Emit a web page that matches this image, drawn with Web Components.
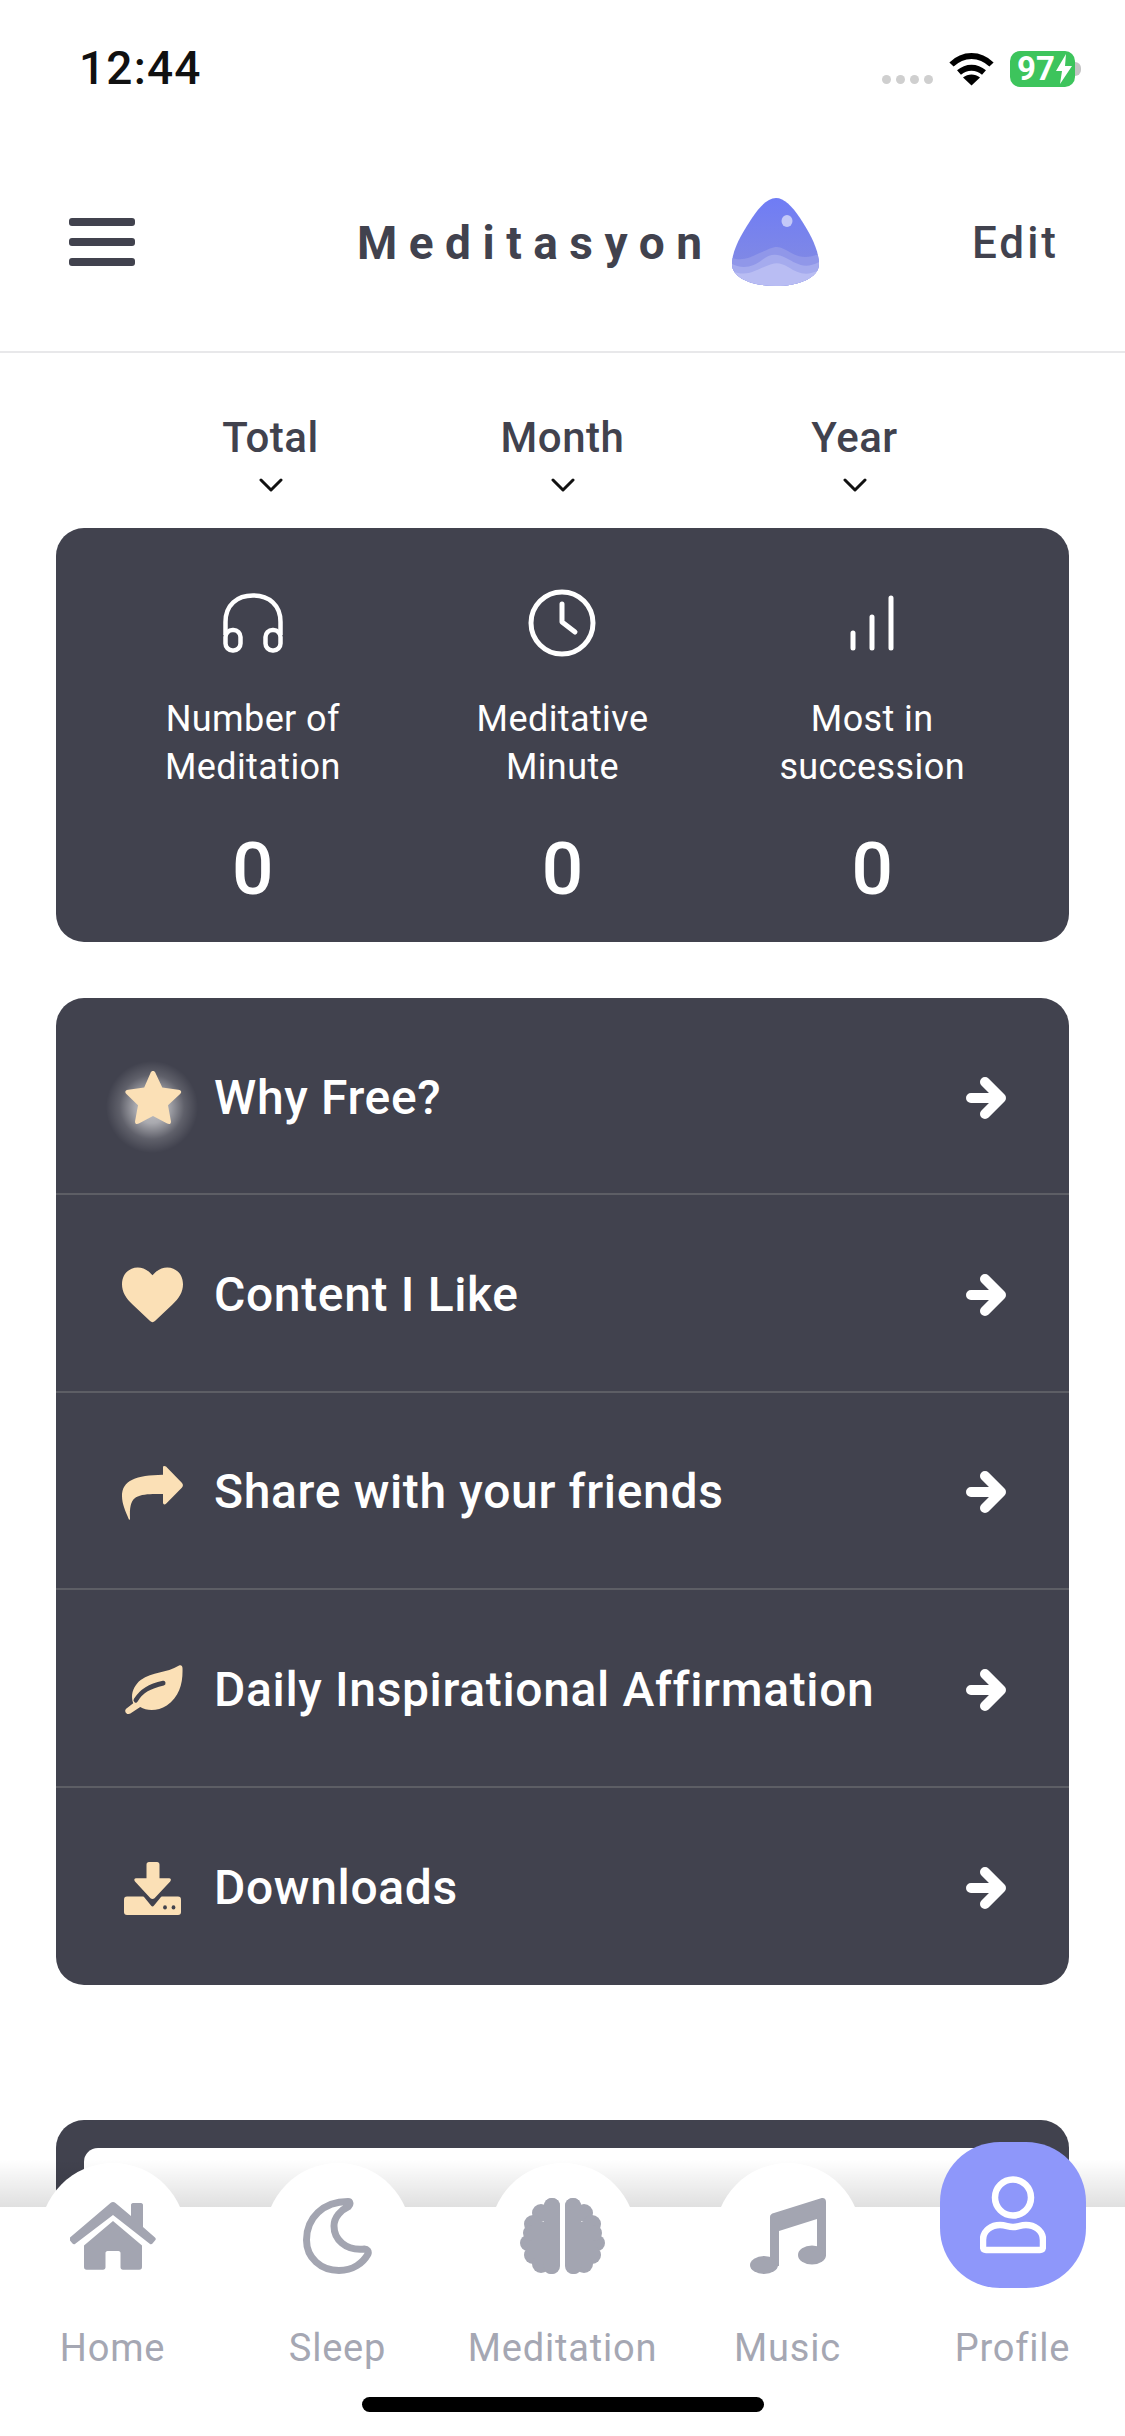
<!DOCTYPE html>
<html lang="en">
<head>
<meta charset="utf-8">
<title>Meditasyon</title>
<style>
  html, body { margin: 0; padding: 0; background: #fff; }
  body { font-family: Roboto, "Noto Sans", sans-serif; width: 1125px; height: 2436px; overflow: hidden; }
  .cream { fill: #fbe0b6; }
</style>
</head>
<body>
<app-screen>
  <status-bar></status-bar>
  <app-header></app-header>
  <period-tabs></period-tabs>

  <stat-card>
    <stat-item><svg slot="icon" width="62" height="60" viewBox="0 0 62 60" fill="none" stroke="#fff" stroke-width="4.500"><path d="M3.500 42V29C3.500 12 15 2.500 31 2.500S58.500 12 58.500 29v13"/><rect x="3.500" y="37" width="15" height="20.500" rx="7"/><rect x="43.500" y="37" width="15" height="20.500" rx="7"/></svg>Number of<br>Meditation<span slot="value">0</span></stat-item>
    <stat-item><svg slot="icon" width="68" height="68" viewBox="0 0 68 68" fill="none" stroke="#fff" stroke-width="5" stroke-linecap="round" stroke-linejoin="round"><circle cx="34" cy="34" r="31"/><path d="M34 15v18l13 10"/></svg>Meditative<br>Minute<span slot="value">0</span></stat-item>
    <stat-item><svg slot="icon" width="44" height="56" viewBox="0 0 44 56" fill="none" stroke="#fff" stroke-width="5" stroke-linecap="round"><path d="M3 53V38M22 53V22M41 53V3"/></svg>Most in<br>succession<span slot="value">0</span></stat-item>
  </stat-card>

  <menu-list>
    <menu-row glow>
      <svg slot="icon" width="58" height="55" viewBox="0 0 58 55"><path class="cream" d="M29 1c1 0 2 .6 2.500 2l6.800 14.500 16 2.200c3 .4 3.800 2.500 1.800 4.300L44 35.200l2.900 15.700c.4 2.700-1.300 3.800-3.700 2.600L29 46l-14.200 7.500c-2.400 1.200-4.100.1-3.700-2.600L14 35.200 2.400 24c-2-1.800-1.200-3.900 1.800-4.300l16-2.200L26.500 3c.5-1.400 1.500-2 2.500-2z"/></svg>
      Why Free?
    </menu-row>
    <menu-row>
      <svg slot="icon" width="62" height="56" viewBox="0 0 62 56"><path class="cream" d="M31 8C36 2 41 0 46 0c9 0 16 7 16 17 0 8-4 14-11 21L33.500 54.500c-1.500 1.500-3.500 1.500-5 0L11 38C4 31 0 25 0 17 0 7 7 0 16 0c5 0 10 2 15 8z"/></svg>
      Content I Like
    </menu-row>
    <menu-row>
      <svg slot="icon" width="61" height="55" viewBox="0 0 61 51" preserveAspectRatio="none"><path class="cream" d="M41 1.500c.8-1 2-.8 3 0l15.800 15c1.500 1.400 1.500 3.200 0 4.600L44 36c-1.200 1-3 .8-3-1.200V27c-9-.3-21-.5-27 3-5 3-6.500 9-6 19.500.1 1.500-.8 1.800-1.300.5C3.500 43 0 36 0 29 0 14 14 9.500 41 9V3z"/></svg>
      Share with your friends
    </menu-row>
    <menu-row>
      <svg slot="icon" width="62" height="49" viewBox="0 0 62 46" preserveAspectRatio="none"><path class="cream" d="M58 .5c2-.8 3.500.3 3.500 2.500 .5 14-3 27-16 35-9 5.500-20 5.500-27 1.500l-10 6c-2 1-3.800.5-4.800-1-.9-1.500-.4-3 1.200-4l6.500-4.500C8 28 12 19 19 14 31 6 45 8 58 .5z"/><path d="M14 33c6-9 14-13 28-16" fill="none" stroke="#41424e" stroke-width="4.500" stroke-linecap="round"/></svg>
      Daily Inspirational Affirmation
    </menu-row>
    <menu-row>
      <svg slot="icon" width="58" height="53" viewBox="0 0 58 49" preserveAspectRatio="none"><rect class="cream" y="32" width="57" height="17" rx="3"/><path d="M9 17h13V3h13v14h13L28.500 39z" fill="#41424e" stroke="#41424e" stroke-width="4" stroke-linejoin="round"/><path class="cream" d="M25 0h8c1.500 0 2.500 1 2.500 2.500V15H45c2 0 2.500 1.500 1.200 3L30.500 33.500c-1.200 1-2.800 1-4 0L11 18c-1.300-1.500-.8-3 1.200-3h10.300V2.500C22.500 1 23.500 0 25 0z"/><circle cx="41" cy="42" r="1.900" fill="#41424e"/><circle cx="49.500" cy="42" r="1.900" fill="#41424e"/></svg>
      Downloads
    </menu-row>
  </menu-list>

  <promo-card></promo-card>

  <tab-bar>
    <tab-item label="Home"><svg width="86" height="68" viewBox="0 0 86 68" fill="#a3a5b1"><path d="M40.500 1c1.500-1.300 3.500-1.300 5 0L61 14V3c0-1 .7-2 2-2h8c1.200 0 2 1 2 2v22l12 10.500c1 .9 1 1.800.2 2.700l-2.700 3.300c-.9 1-1.800 1-2.800.2L43 13 5.300 41.700c-1 .8-1.900.8-2.800-.2L-.2 38.200c-.8-.9-.8-1.800.2-2.700z"/><path d="M43 19l29 24.500V65c0 1.700-1 2.800-2.700 2.800H53c-1.500 0-2.500-1-2.500-2.500V51c0-1-.8-2-2-2h-11c-1.200 0-2 1-2 2v14.300c0 1.500-1 2.500-2.500 2.500H16.700c-1.700 0-2.700-1.100-2.700-2.800V43.500z"/></svg></tab-item>
    <tab-item label="Sleep"><svg width="69" height="76" viewBox="0 0 69 76" fill="none" stroke="#a3a5b1" stroke-width="7" stroke-linejoin="round"><path d="M45 3.500C20 3.500 3.500 20 3.500 42c0 18 14.500 30.500 32.500 30.500 14 0 24-7.500 29-16.500 1-3-1-5-3.500-5C42 53 31 41 31 28c0-9 7-16 14.500-19.500C48 6 47 3.500 45 3.500z"/></svg></tab-item>
    <tab-item label="Meditation"><svg width="85" height="76" viewBox="0 0 85 76" fill="#a3a5b1"><g><circle cx="32" cy="8" r="8"/><circle cx="21" cy="15" r="9"/><circle cx="13" cy="26" r="9"/><circle cx="8" cy="45" r="8"/><circle cx="11" cy="35" r="8"/><circle cx="13" cy="57" r="9"/><circle cx="21" cy="66" r="9"/><circle cx="31" cy="68" r="8"/><path d="M12 24h20v36H12z"/><rect x="24" y="0" width="16" height="76" rx="8"/></g><g transform="matrix(-1 0 0 1 85 0)"><circle cx="32" cy="8" r="8"/><circle cx="21" cy="15" r="9"/><circle cx="13" cy="26" r="9"/><circle cx="8" cy="45" r="8"/><circle cx="11" cy="35" r="8"/><circle cx="13" cy="57" r="9"/><circle cx="21" cy="66" r="9"/><circle cx="31" cy="68" r="8"/><path d="M12 24h20v36H12z"/><rect x="24" y="0" width="16" height="76" rx="8"/></g></svg></tab-item>
    <tab-item label="Music"><svg width="76" height="76" viewBox="0 0 76 76" fill="#a3a5b1"><path d="M24 15L71 .3C74 -.6 76 1 76 4v54h-9V21l-38 12v35h-9V19c0-2 1.500-3.400 4-4z"/><ellipse cx="14" cy="67" rx="14" ry="9"/><ellipse cx="62" cy="57" rx="14" ry="9.500"/></svg></tab-item>
    <tab-item label="Profile" active><svg width="66" height="78" viewBox="0 0 66 78" fill="none" stroke="#fff" stroke-width="6.500" stroke-linejoin="round"><circle cx="33" cy="21.500" r="18"/><path d="M6 74h54c2 0 3-1.500 3-4v-6c0-10-9-15-17-15-6 0-8 2-13 2s-7-2-13-2C12 49 3 54 3 64v6c0 2.500 1 4 3 4z"/></svg></tab-item>
  </tab-bar>
</app-screen>

<script>
// small helper, every element just stamps its own shadow root
const shadow = (el, html) => {
  el.attachShadow({ mode: 'open' }).innerHTML = html;
};

class AppScreen extends HTMLElement {
  constructor() {
    super();
    shadow(this, `
      <style>
        :host { display: block; position: relative; width: 1125px; height: 2436px; overflow: hidden; background: #fff; color: #41424e; }
      </style>
      <slot></slot>`);
  }
}

class StatusBar extends HTMLElement {
  constructor() {
    super();
    shadow(this, `
      <style>
        :host { display: flex; height: 120px; padding: 40px 44px 0 79px; box-sizing: border-box; align-items: flex-start; justify-content: space-between; color: #000; }
        .time { font: 500 46px/56px Roboto, sans-serif; letter-spacing: 1.200px; color: #111; }
        .right { display: flex; align-items: flex-start; margin-top: 11px; }
        .dots { display: flex; gap: 5px; margin: 24px 16px 0 0; }
        .dots i { width: 9px; height: 9px; border-radius: 50%; background: #cfcfcf; }
        .wifi { margin: 1px 16px 0 0; }
        .batt { position: relative; width: 65px; height: 36px; border-radius: 10px; background: #3dc45c; color: #fff; display: flex; align-items: center; padding-left: 7px; box-sizing: border-box; font: 700 33px/36px Roboto, sans-serif; }
        .batt svg { margin-left: 1px; }
        .nub { width: 6px; height: 14px; margin-top: 11px; border-radius: 0 7px 7px 0; background: #c4c4c4; }
      </style>
      <span class="time">12:44</span>
      <div class="right">
        <div class="dots"><i></i><i></i><i></i><i></i></div>
        <svg class="wifi" width="45" height="34" viewBox="0 0 45 34" fill="none" stroke="#000" stroke-width="6"><path d="M2.500 12.500C14 1 31 1 42.500 12.500M10 20.500c7.500-6.500 17.500-6.500 25 0"/><path d="M22.500 33.500l-8.500-8c5-4 12-4 17 0z" fill="#000" stroke="none"/></svg>
        <div class="batt">97<svg width="16" height="30" viewBox="0 0 16 30" fill="#fff"><path d="M10 0L0 17h6l-2 13 12-18H9z"/></svg></div>
        <div class="nub"></div>
      </div>`);
  }
}

class AppHeader extends HTMLElement {
  constructor() {
    super();
    shadow(this, `
      <style>
        :host { display: flex; align-items: center; height: 233px; padding: 12px 66px 0 69px; box-sizing: border-box; border-bottom: 2px solid #e8e8ea; }
        .burger { display: flex; flex-direction: column; gap: 12px; width: 66px; }
        .burger i { height: 8px; border-radius: 3px; background: #41424e; }
        .brand { display: flex; align-items: center; margin-left: 222px; }
        h1 { margin: 3px 0 0; font: 700 46px/54px Roboto, sans-serif; letter-spacing: 11.500px; color: #41424e; }
        svg { margin-left: 18px; }
        .edit { margin-left: auto; margin-top: 3px; font: 500 44px/54px Roboto, sans-serif; letter-spacing: 3px; color: #41424e; }
      </style>
      <div class="burger"><i></i><i></i><i></i></div>
      <div class="brand">
        <h1>Meditasyon</h1>
        <svg width="87" height="88" viewBox="0 0 87 88">
          <defs>
            <clipPath id="drop"><path d="M44 0C52 0 60 8 68 20 78 35 87 52 87 66 87 80 66 88 44 88 20 88 0 80 0 66 0 52 10 35 20 20 28 8 36 0 44 0z"/></clipPath>
            <linearGradient id="body" x1="0" y1="0" x2="0" y2="1"><stop offset="0" stop-color="#6f7cf5"/><stop offset=".7" stop-color="#7f88e6"/></linearGradient>
          </defs>
          <g clip-path="url(#drop)">
            <rect width="87" height="88" fill="url(#body)"/>
            <path d="M0 60C12 64 20 58 30 54S44 46 54 52 72 62 87 56V88H0z" fill="#9097e9"/>
            <path d="M0 66C12 72 22 68 30 62S44 55 54 60 72 72 87 64V88H0z" fill="#a5abee"/>
            <path d="M0 73C14 79 22 73 32 69S46 63 56 69 74 79 87 72V88H0z" fill="#b9bdf3"/>
            <ellipse cx="55" cy="23" rx="5.500" ry="6" fill="#c3c8f8"/>
          </g>
        </svg>
      </div>
      <span class="edit">Edit</span>`);
  }
}

class PeriodTabs extends HTMLElement {
  constructor() {
    super();
    const names = ['Total', 'Month', 'Year'];
    shadow(this, `
      <style>
        :host { display: grid; grid-template-columns: repeat(3, 292px); justify-content: center; height: 175px; padding-top: 60px; box-sizing: border-box; }
        div { display: flex; flex-direction: column; align-items: center; gap: 15px; font: 500 42px/50px Roboto, sans-serif; letter-spacing: .5px; color: #41424e; }
      </style>
      ${names.map(n => `<div>${n}<svg width="24" height="14" viewBox="0 0 24 14" fill="none" stroke="#111" stroke-width="3" stroke-linecap="round" stroke-linejoin="round"><path d="M2 2l10 10L22 2"/></svg></div>`).join('')}`);
  }
}

class StatCard extends HTMLElement {
  constructor() {
    super();
    shadow(this, `
      <style>
        :host { display: grid; grid-template-columns: repeat(3, 1fr); margin: 0 56px; padding: 60px 42px 33px; height: 414px; box-sizing: border-box; background: #41424e; border-radius: 28px; color: #fff; }
      </style>
      <slot></slot>`);
  }
}

class StatItem extends HTMLElement {
  constructor() {
    super();
    shadow(this, `
      <style>
        :host { display: flex; flex-direction: column; align-items: center; text-align: center; }
        .icon { display: flex; align-items: center; justify-content: center; height: 70px; }
        .label { margin-top: 37px; font: 400 36px/48px Roboto, sans-serif; letter-spacing: .4px; color: #fff; }
        .value { margin-top: 38px; font: 500 73px/80px Roboto, sans-serif; color: #fff; }
      </style>
      <div class="icon"><slot name="icon"></slot></div>
      <div class="label"><slot></slot></div>
      <div class="value"><slot name="value"></slot></div>`);
  }
}

class MenuList extends HTMLElement {
  constructor() {
    super();
    shadow(this, `
      <style>
        :host { display: grid; grid-auto-rows: 1fr; margin: 56px 56px 0; height: 987px; background: #41424e; border-radius: 28px; overflow: hidden; }
        ::slotted(menu-row:not(:last-child)) { border-bottom: 2px solid #5d5e65; }
      </style>
      <slot></slot>`);
  }
}

class MenuRow extends HTMLElement {
  constructor() {
    super();
    shadow(this, `
      <style>
        :host { display: flex; align-items: center; padding: 4px 63px 0 66px; box-sizing: border-box; color: #fff; font: 500 48px/60px Roboto, sans-serif; letter-spacing: .65px; }
        .icon { position: relative; display: flex; align-items: center; justify-content: center; width: 61px; height: 60px; margin-right: 31px; }
        :host([glow]) .icon::before { content: ""; position: absolute; left: -16px; top: -7px; width: 92px; height: 92px; border-radius: 50%; background: radial-gradient(circle closest-side, rgba(255,255,255,.68) 0, rgba(255,255,255,.55) 35%, rgba(255,255,255,.16) 70%, rgba(255,255,255,0) 100%); }
        ::slotted(svg) { position: relative; }
        .text { flex: 1; }
      </style>
      <div class="icon"><slot name="icon"></slot></div>
      <div class="text"><slot></slot></div>
      <svg width="40" height="42" viewBox="0 0 40 42" fill="none" stroke="#fff" stroke-width="10" stroke-linecap="round" stroke-linejoin="round"><path d="M5 21h29M19 5l16 16-16 16"/></svg>`);
  }
}

class PromoCard extends HTMLElement {
  constructor() {
    super();
    shadow(this, `
      <style>
        :host { display: block; margin: 135px 56px 0; height: 400px; padding: 28px 28px 0; box-sizing: border-box; background: #41424e; border-radius: 28px 28px 0 0; }
        div { height: 100%; background: #fff; border-radius: 14px 14px 0 0; }
      </style>
      <div></div>`);
  }
}

class TabBar extends HTMLElement {
  constructor() {
    super();
    shadow(this, `
      <style>
        :host { position: absolute; left: 0; right: 0; bottom: 0; height: 229px; display: grid; grid-template-columns: repeat(5, 225px); background: #fff; }
        :host::before { content: ""; position: absolute; left: 0; right: 0; top: -48px; height: 48px; background: linear-gradient(rgba(0,0,0,0), rgba(0,0,0,.12)); }
        .home { position: absolute; left: 50%; bottom: 24px; width: 402px; height: 15px; margin-left: -201px; border-radius: 8px; background: #000; }
      </style>
      <slot></slot>
      <div class="home"></div>`);
  }
}

class TabItem extends HTMLElement {
  constructor() {
    super();
    shadow(this, `
      <style>
        :host { position: relative; display: block; text-align: center; }
        .bump { position: absolute; left: 50%; top: -44px; width: 146px; height: 146px; margin-left: -73px; border-radius: 50%; background: #fff; display: flex; align-items: center; justify-content: center; }
        :host([active]) .bump { top: -65px; border-radius: 60px; background: #8e97fa; }
        .label { position: absolute; left: 0; right: 0; top: 118px; font: 400 38px/46px Roboto, sans-serif; letter-spacing: .8px; color: #a5a7b3; }
      </style>
      <div class="bump"><slot></slot></div>
      <div class="label">${this.getAttribute('label')}</div>`);
  }
}

customElements.define('app-screen', AppScreen);
customElements.define('status-bar', StatusBar);
customElements.define('app-header', AppHeader);
customElements.define('period-tabs', PeriodTabs);
customElements.define('stat-card', StatCard);
customElements.define('stat-item', StatItem);
customElements.define('menu-list', MenuList);
customElements.define('menu-row', MenuRow);
customElements.define('promo-card', PromoCard);
customElements.define('tab-bar', TabBar);
customElements.define('tab-item', TabItem);
</script>
</body>
</html>
